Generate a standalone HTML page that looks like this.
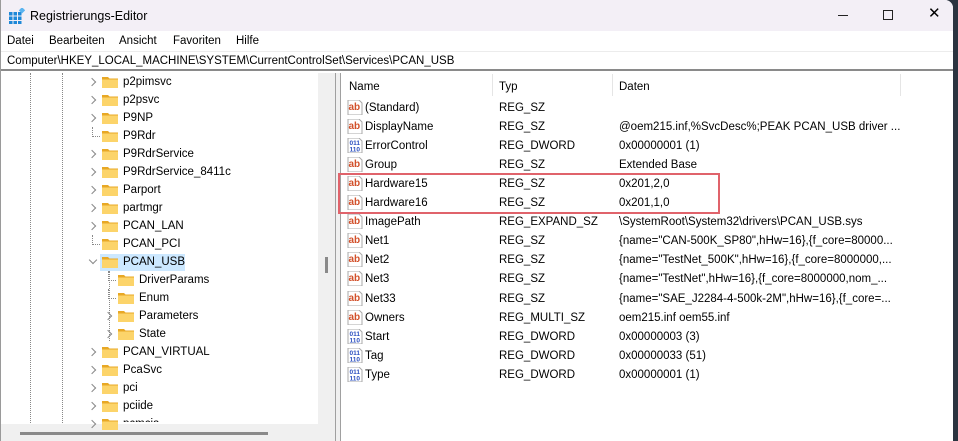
<!DOCTYPE html>
<html><head><meta charset="utf-8"><style>
*{margin:0;padding:0;box-sizing:border-box}
body{width:958px;height:441px;overflow:hidden;background:#2b3440;font-family:"Liberation Sans",sans-serif;font-size:11.5px;color:#000;position:relative}
.win{position:absolute;left:0;top:0;width:953px;height:441px;background:#fff;border-left:1px solid #9a9a9a;border-top-right-radius:8px;overflow:hidden}
.title{position:absolute;left:0;top:0;width:100%;height:31px;background:#f3eff6}
.t{position:absolute;white-space:nowrap;line-height:14px}
.menu{position:absolute;top:31px;height:19px;width:100%;background:#fff}
.addr{position:absolute;top:51px;height:20px;width:100%;background:#fff;border-top:1px solid #ececec;border-bottom:2px solid #8a8a8a}
.fold{position:absolute;width:16px;height:12px}
.chev{position:absolute;width:6px;height:6px;border-right:1.3px solid #888;border-bottom:1.3px solid #888;transform:rotate(-45deg)}
.vd{position:absolute;width:0;border-left:1px dotted #888}
.hd{position:absolute;height:0;border-top:1px dotted #888}
.ic{position:absolute;width:16px;height:15px}
</style></head><body>
<div class="win">
<div class="title">
<svg style="position:absolute;left:8px;top:8px" width="16" height="16"><g fill="#1e88d8"><rect x="0" y="4" width="3.5" height="3.5"/><rect x="4.5" y="4" width="3.5" height="3.5"/><rect x="9" y="4" width="3.5" height="3.5"/><rect x="0" y="8.5" width="3.5" height="3.5"/><rect x="4.5" y="8.5" width="3.5" height="3.5"/><rect x="9" y="8.5" width="3.5" height="3.5"/><rect x="0" y="13" width="3.5" height="3"/><rect x="4.5" y="13" width="3.5" height="3"/><rect x="9" y="13" width="3.5" height="3"/></g><rect x="11" y="0" width="4.5" height="4.5" fill="#5ab4f0" transform="rotate(45 13 2)"/></svg>
<div class="t" style="left:29px;top:9px;font-size:12.5px">Registrierungs-Editor</div>
<div style="position:absolute;left:837px;top:15px;width:10px;height:1px;background:#222"></div>
<div style="position:absolute;left:882px;top:10px;width:10px;height:10px;border:1px solid #222"></div>
<div class="t" style="left:927px;top:7px;font-size:15px">✕</div>
</div>
<div class="menu">
<div class="t" style="left:6px;top:3px">Datei</div>
<div class="t" style="left:48px;top:3px">Bearbeiten</div>
<div class="t" style="left:118px;top:3px">Ansicht</div>
<div class="t" style="left:172px;top:3px">Favoriten</div>
<div class="t" style="left:235px;top:3px">Hilfe</div>
</div>
<div class="addr"><div class="t" style="left:6px;top:2px">Computer\HKEY_LOCAL_MACHINE\SYSTEM\CurrentControlSet\Services\PCAN_USB</div></div>

<div style="position:absolute;left:317px;top:73px;width:17px;height:351px;background:#f0f0f0"></div>
<div style="position:absolute;left:324px;top:257px;width:3px;height:16px;background:#8a8a8a"></div>
<div style="position:absolute;left:334px;top:73px;width:1px;height:368px;background:#a0a0a0"></div>
<div style="position:absolute;left:335px;top:73px;width:4px;height:368px;background:#f0f0f0"></div>
<div style="position:absolute;left:339px;top:73px;width:1px;height:368px;background:#a0a0a0"></div>
<div style="position:absolute;left:0;top:424px;width:334px;height:17px;background:#f0f0f0"></div>
<div style="position:absolute;left:19px;top:432px;width:248px;height:3px;background:#8a8a8a"></div>
<div class="vd" style="left:29px;top:73px;height:350px"></div>
<div class="vd" style="left:61px;top:73px;height:350px"></div>
<div style="position:absolute;left:99px;top:254px;width:85px;height:17px;background:#cce8ff"></div>
<div id="tree"></div>

<div class="t" style="left:348px;top:80px">Name</div>
<div class="t" style="left:498px;top:80px">Typ</div>
<div class="t" style="left:618px;top:80px">Daten</div>
<div style="position:absolute;left:491px;top:74px;width:1px;height:22px;background:#e5e5e5"></div>
<div style="position:absolute;left:611px;top:74px;width:1px;height:22px;background:#e5e5e5"></div>
<div style="position:absolute;left:899px;top:74px;width:1px;height:22px;background:#e5e5e5"></div>
<div id="list"></div>
<div style="position:absolute;left:337px;top:173px;width:382px;height:41px;border:2px solid #e0636b"></div>
</div>
<script>
var tree=[["p2pimsvc",0,1],["p2psvc",0,1],["P9NP",0,1],["P9Rdr",0,0],["P9RdrService",0,1],["P9RdrService_8411c",0,1],["Parport",0,1],["partmgr",0,1],["PCAN_LAN",0,1],["PCAN_PCI",0,0],["PCAN_USB",0,2],["DriverParams",1,0],["Enum",1,0],["Parameters",1,1],["State",1,1],["PCAN_VIRTUAL",0,1],["PcaSvc",0,1],["pci",0,1],["pciide",0,1],["pcmcia",0,1]];
var h="";
tree.forEach(function(r,i){var y=73+i*18,x=r[1]?117:101;
h+='<svg class="fold" style="left:'+x+'px;top:'+(y+3)+'px" viewBox="0 0 16 12"><path d="M0 1h6l1.5 1.5H16V12H0z" fill="#e8a825"/><rect x="0" y="3.5" width="16" height="8.5" fill="#fcd46a"/></svg>';
var cx=x-9;
if(r[2]==1)h+='<div class="chev" style="left:'+(cx-4)+'px;top:'+(y+6)+'px"></div>';
else if(r[2]==2)h+='<div class="chev" style="left:'+(cx-3)+'px;top:'+(y+4)+'px;transform:rotate(45deg)"></div>';
else h+='<div class="vd" style="left:'+(cx-1)+'px;top:'+(y)+'px;height:10px"></div><div class="hd" style="left:'+(cx-1)+'px;top:'+(y+9)+'px;width:8px"></div>';
h+='<div class="t" style="left:'+(x+21)+'px;top:'+(y+2)+'px;'+(i>=19?'clip-path:inset(0 0 9px 0)':'')+'">'+r[0]+'</div>';});
h+='<div class="vd" style="left:108px;top:271px;height:70px"></div>';
document.getElementById("tree").innerHTML=h;
var L=[["(Standard)","REG_SZ",""],["DisplayName","REG_SZ","@oem215.inf,%SvcDesc%;PEAK PCAN_USB driver ..."],["ErrorControl","REG_DWORD","0x00000001 (1)"],["Group","REG_SZ","Extended Base"],["Hardware15","REG_SZ","0x201,2,0"],["Hardware16","REG_SZ","0x201,1,0"],["ImagePath","REG_EXPAND_SZ","\\SystemRoot\\System32\\drivers\\PCAN_USB.sys"],["Net1","REG_SZ",'{name="CAN-500K_SP80",hHw=16},{f_core=80000...'],["Net2","REG_SZ",'{name="TestNet_500K",hHw=16},{f_core=8000000,...'],["Net3","REG_SZ",'{name="TestNet",hHw=16},{f_core=8000000,nom_...'],["Net33","REG_SZ",'{name="SAE_J2284-4-500k-2M",hHw=16},{f_core=...'],["Owners","REG_MULTI_SZ","oem215.inf oem55.inf"],["Start","REG_DWORD","0x00000003 (3)"],["Tag","REG_DWORD","0x00000033 (51)"],["Type","REG_DWORD","0x00000001 (1)"]];
h="";
L.forEach(function(r,i){var y=98+i*19.05;
var ico=r[1]=="REG_DWORD"?'<svg class="ic" style="left:346px;top:'+(y+2)+'px" viewBox="0 0 16 15"><path d="M1 0h11l3 3v12H1z" fill="#fff" stroke="#aaa"/><text x="2.5" y="7" font-size="6.5" font-family="Liberation Sans" font-weight="bold" fill="#2a4fc0">011</text><text x="2.5" y="13.5" font-size="6.5" font-family="Liberation Sans" font-weight="bold" fill="#2a4fc0">110</text></svg>':'<svg class="ic" style="left:346px;top:'+(y+2)+'px" viewBox="0 0 16 15"><path d="M1 0h11l3 3v12H1z" fill="#fff" stroke="#aaa"/><text x="1.5" y="10" font-size="10" font-family="Liberation Sans" font-weight="bold" fill="#d2502a">ab</text></svg>';
h+=ico+'<div class="t" style="left:364px;top:'+(y+3)+'px">'+r[0]+'</div><div class="t" style="left:498px;top:'+(y+3)+'px">'+r[1]+'</div><div class="t" style="left:618px;top:'+(y+3)+'px">'+r[2].replace(/</g,"&lt;")+'</div>';});
document.getElementById("list").innerHTML=h;
</script>
</body></html>
